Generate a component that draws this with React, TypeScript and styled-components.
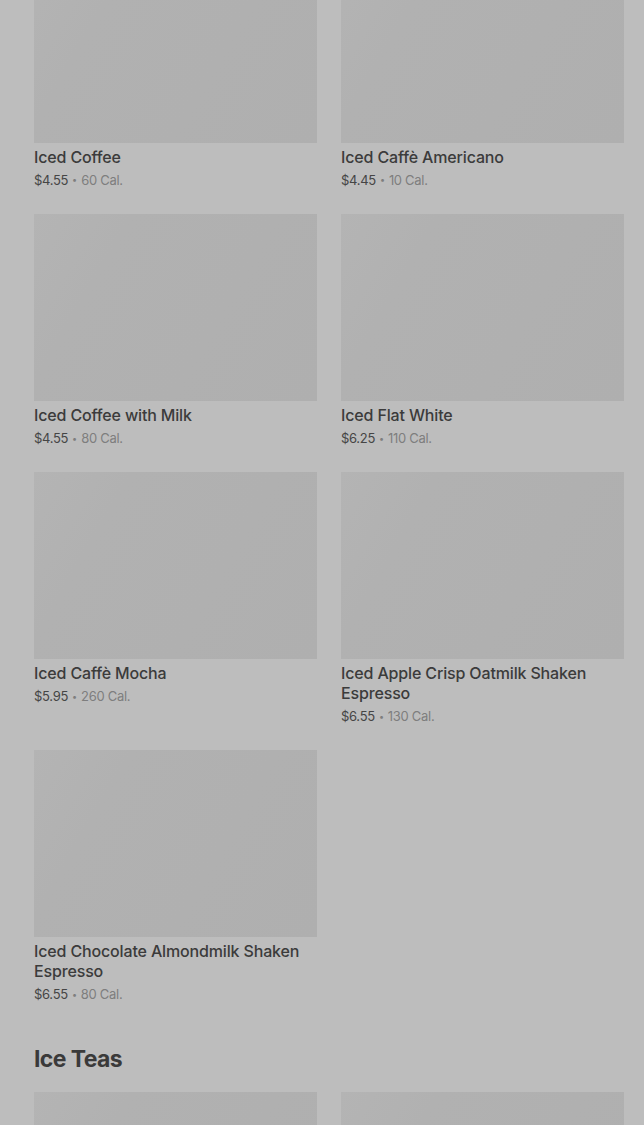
import React from 'react';
import styled, { createGlobalStyle } from 'styled-components';

const GlobalStyle = createGlobalStyle`
  html, body {
    margin: 0;
    padding: 0;
    background: #bdbdbd;
    overflow: hidden;
  }
  body {
    font-family: Inter, "Noto Sans", sans-serif;
    -webkit-font-smoothing: antialiased;
  }
`;

const Page = styled.div`
  width: 644px;
  height: 1125px;
  overflow: hidden;
  box-sizing: border-box;
  padding: 0 20px 0 34px;
  background: #bdbdbd;
`;

const Section = styled.section<{ offset?: number }>`
  margin-top: ${(props) => props.offset ?? 0}px;
`;

const SectionTitle = styled.h2`
  margin: 41px 0 18px;
  font-size: 23px;
  line-height: 30px;
  font-weight: 700;
  letter-spacing: -0.6px;
  color: #3a3a3a;
`;

const Grid = styled.div`
  display: grid;
  grid-template-columns: 283px 283px;
  column-gap: 24px;
  row-gap: 25px;
`;

const Card = styled.div`
  display: flex;
  flex-direction: column;
`;

const Thumb = styled.div`
  height: 187px;
  background: linear-gradient(120deg, #b4b4b4 0%, #b1b1b1 25%, #afafaf 100%);
`;

const Name = styled.div`
  margin-top: 4px;
  font-size: 16px;
  line-height: 20px;
  font-weight: 500;
  letter-spacing: -0.15px;
  color: #3b3b3b;
`;

const Meta = styled.div`
  margin-top: 4px;
  height: 18px;
  font-size: 13px;
  line-height: 18px;
  letter-spacing: -0.3px;
  color: #454545;
  white-space: nowrap;
`;

const Dot = styled.span`
  display: inline-block;
  margin: 0 3px;
  color: #7e7e7e;
  transform: scale(0.7);
`;

const Cal = styled.span`
  color: #7e7e7e;
`;

interface Drink {
  name: string;
  price: string;
  cal: number;
}

const coffees: Drink[] = [
  { name: 'Iced Coffee', price: '$4.55', cal: 60 },
  { name: 'Iced Caffè Americano', price: '$4.45', cal: 10 },
  { name: 'Iced Coffee with Milk', price: '$4.55', cal: 80 },
  { name: 'Iced Flat White', price: '$6.25', cal: 110 },
  { name: 'Iced Caffè Mocha', price: '$5.95', cal: 260 },
  { name: 'Iced Apple Crisp Oatmilk Shaken Espresso', price: '$6.55', cal: 130 },
  { name: 'Iced Chocolate Almondmilk Shaken Espresso', price: '$6.55', cal: 80 },
];

const DrinkCard: React.FC<{ drink: Drink }> = ({ drink }) => (
  <Card>
    <Thumb />
    <Name>{drink.name}</Name>
    <Meta>
      {drink.price}
      <Dot>•</Dot>
      <Cal>{drink.cal} Cal.</Cal>
    </Meta>
  </Card>
);

export default function App() {
  return (
    <>
      <GlobalStyle />
      <Page>
        <Section offset={-44}>
          <Grid>
            {coffees.map((d) => (
              <DrinkCard key={d.name} drink={d} />
            ))}
          </Grid>
        </Section>
        <Section>
          <SectionTitle>Ice Teas</SectionTitle>
          <Grid>
            <Card>
              <Thumb />
            </Card>
            <Card>
              <Thumb />
            </Card>
          </Grid>
        </Section>
      </Page>
    </>
  );
}
